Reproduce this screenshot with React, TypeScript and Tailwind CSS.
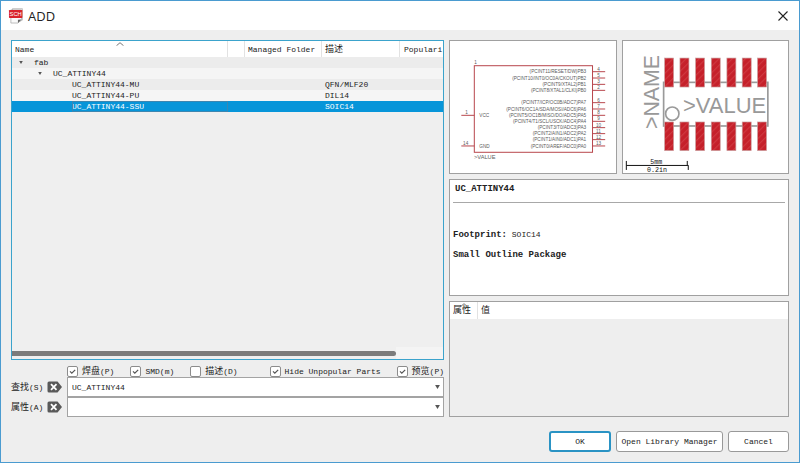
import type { ReactNode } from "react";

const MONO = "font-['Liberation_Mono','Noto_Sans_CJK_SC',monospace]";

function Cjk({ children }: { children: ReactNode }) {
  return <span className="inline-block pt-[2px] align-middle text-[9px]">{children}</span>;
}

function SchIcon() {
  return (
    <svg viewBox="24 20 48 50" className="h-4 w-4" aria-hidden="true">
      <path d="M37 22h31v36l-9 4H37z" fill="#f4f4f4" stroke="#a8a8a8" strokeWidth="2" />
      <path d="M32 26h33v31L54 67H32z" fill="#fafafa" stroke="#9b9b9b" strokeWidth="2" />
      <path d="M65 56L54 67V57z" fill="#666" />
      <rect x="26" y="26" width="42" height="25" rx="2" fill="#d9242b" />
      <text x="47" y="45" textAnchor="middle" fontSize="18" fill="#fff" fontFamily="Liberation Sans, sans-serif">
        SCH
      </text>
    </svg>
  );
}

function SortCaret() {
  return (
    <svg viewBox="0 0 8 4" className="absolute top-px left-1/2 h-1 w-2 -translate-x-1/2" aria-hidden="true">
      <path d="M0.5 3.7L4 0.7L7.5 3.7" fill="none" stroke="#777" />
    </svg>
  );
}

function DownArrow({ small }: { small?: boolean }) {
  return (
    <svg viewBox="0 0 6 5" className={small ? "h-[3px] w-1" : "h-1 w-[5px]"} aria-hidden="true">
      <path d="M0 0h6L3 5z" fill="#555" />
    </svg>
  );
}

type Row = { name: string; level: number; open?: boolean; desc?: string; selected?: boolean };

const rows: Row[] = [
  { name: "fab", level: 0, open: true },
  { name: "UC_ATTINY44", level: 1, open: true },
  { name: "UC_ATTINY44-MU", level: 2, desc: "QFN/MLF20" },
  { name: "UC_ATTINY44-PU", level: 2, desc: "DIL14" },
  { name: "UC_ATTINY44-SSU", level: 2, desc: "SOIC14", selected: true },
];

const indent = ["pl-[7px]", "pl-[26px]", "pl-[45px]"];

function PartTree() {
  const head = "relative h-4 overflow-hidden border-r border-[#e2e2e2] p-0 text-left font-normal whitespace-nowrap";
  return (
    <div className="flex min-h-[200px] flex-1 flex-col overflow-hidden border border-[#3ba3cc] bg-[#efefef]">
      <table className="w-full table-fixed border-separate border-spacing-0">
        <colgroup>
          <col />
          <col className="w-[17px]" />
          <col className="w-[77px]" />
          <col className="w-[78px]" />
          <col className="w-[43px]" />
        </colgroup>
        <thead>
          <tr className="bg-white">
            <th className={head}>
              <SortCaret />
              <span className="pl-[3px]">Name</span>
            </th>
            <th className={head} aria-label="Icon" />
            <th className={head}>
              <span className="pl-[3px]">Managed Folder</span>
            </th>
            <th className={head}>
              <div className="flex pl-[3px]">
                <Cjk>描述</Cjk>
              </div>
            </th>
            <th className="h-4 overflow-hidden p-0 text-left font-normal whitespace-nowrap">
              <span className="pl-1">Populari</span>
            </th>
          </tr>
        </thead>
        <tbody>
          {rows.map((r) => (
            <tr
              key={r.name}
              className={r.selected ? "bg-[#0795d9] text-white" : "odd:bg-[#ececec] even:bg-[#f5f5f5]"}
            >
              <td className="h-[11px] p-0">
                <div className={`flex h-[11px] items-center ${indent[r.level]}`}>
                  <span className="flex w-[15px] shrink-0">{r.open && <DownArrow small />}</span>
                  <span className={r.selected ? "flex-1 outline-1 -outline-offset-1 outline-[#3d86b0]" : ""}>{r.name}</span>
                </div>
              </td>
              <td className="p-0" />
              <td className="p-0" />
              <td className="p-0 pl-[3px]">{r.desc}</td>
              <td className="p-0" />
            </tr>
          ))}
        </tbody>
      </table>
      <div className="mt-auto flex h-3 items-center bg-[#f4f4f4]">
        <div className="flex h-3 w-[89%] items-center bg-[#efefef]">
          <div className="h-[5px] w-full rounded-r-full bg-[#7b7b7b]" />
        </div>
      </div>
    </div>
  );
}

function Check({ children, checked, className = "" }: { children: ReactNode; checked?: boolean; className?: string }) {
  return (
    <label className={`flex items-center gap-1 whitespace-nowrap ${className}`}>
      <span className="grid">
        <input
          type="checkbox"
          defaultChecked={checked}
          className="peer col-start-1 row-start-1 h-[11px] w-[11px] appearance-none rounded-[2px] border border-[#8c8c8c] bg-white"
        />
        <svg
          viewBox="0 0 11 11"
          className="pointer-events-none invisible col-start-1 row-start-1 h-[11px] w-[11px] peer-checked:visible"
          aria-hidden="true"
        >
          <path d="M3 5.4L4.8 7.2L8.2 3.8" fill="none" stroke="#555" strokeWidth="1.2" />
        </svg>
      </span>
      <span className="flex items-center">{children}</span>
    </label>
  );
}

function Combo({ id, label, value }: { id: string; label: ReactNode; value: string }) {
  return (
    <div className="flex h-5 items-center">
      <label htmlFor={id} className="flex w-9 items-center whitespace-nowrap">
        {label}
      </label>
      <button type="button" aria-label="Clear" className="w-5">
        <svg viewBox="0 0 15 12" className="h-3 w-[15px]" aria-hidden="true">
          <path d="M2 0.5h8.5L15 6l-4.500 5.500H2Q0.500 11.500 0.500 10V2Q0.500 0.500 2 0.500z" fill="#595959" />
          <path d="M4 3.200L9.500 8.800M9.500 3.200L4 8.800" stroke="#fff" strokeWidth="1.800" />
        </svg>
      </button>
      <div className="flex h-5 min-w-0 flex-1 items-center border border-[#a3a3a3] bg-white">
        <input id={id} defaultValue={value} className="h-full min-w-0 flex-1 bg-transparent pl-1 outline-none" />
        <button type="button" aria-label="Open list" className="flex h-full w-3 items-center justify-center">
          <DownArrow />
        </button>
      </div>
    </div>
  );
}

const pins = [
  { y: 107, n: "4", t: "(PCINT11/RESET/DW)PB3" },
  { y: 126, n: "5", t: "(PCINT10/INT0/OC0A/CKOUT)PB2" },
  { y: 145, n: "3", t: "(PCINT9/XTAL2)PB1" },
  { y: 163, n: "2", t: "(PCINT8/XTAL1/CLKI)PB0" },
  { y: 200, n: "6", t: "(PCINT7/ICP/OC0B/ADC7)PA7" },
  { y: 219, n: "7", t: "(PCINT6/OC1A/SDA/MOSI/ADC6)PA6" },
  { y: 238, n: "8", t: "(PCINT5/OC1B/MISO/DO/ADC5)PA5" },
  { y: 256, n: "9", t: "(PCINT4/T1/SCL/USCK/ADC4)PA4" },
  { y: 275, n: "10", t: "(PCINT3/T0/ADC3)PA3" },
  { y: 293, n: "11", t: "(PCINT2/AIN1/ADC2)PA2" },
  { y: 311, n: "12", t: "(PCINT1/AIN0/ADC1)PA1" },
  { y: 330, n: "13", t: "(PCINT0/AREF/ADC0)PA0" },
];

function Schematic() {
  return (
    <svg
      viewBox="15 15 497 396"
      className="h-full w-full"
      role="img"
      aria-label="Symbol"
      fontFamily="Liberation Sans, sans-serif"
      fontSize="14"
      fill="#5c5c5c"
    >
      <rect x="88" y="89" width="355" height="260" fill="none" stroke="#b8464c" strokeWidth="3" />
      {pins.map((p) => (
        <g key={p.n}>
          <path d={`M443 ${p.y}h38`} stroke="#b8464c" strokeWidth="3" />
          <text x="424" y={p.y + 5} textAnchor="end">
            {p.t}
          </text>
          <text x="461" y={p.y - 3} textAnchor="middle">
            {p.n}
          </text>
        </g>
      ))}
      <path d="M49 238h39M49 330h39" stroke="#b8464c" strokeWidth="3" />
      <text x="65" y="235" textAnchor="middle">1</text>
      <text x="62" y="327" textAnchor="middle">14</text>
      <text x="103" y="242">VCC</text>
      <text x="103" y="335">GND</text>
      <text x="88" y="83">1</text>
      <text x="87" y="368" fontSize="17">&gt;VALUE</text>
    </svg>
  );
}

const pads = [147, 193, 240, 287, 334, 380, 426];

function Footprint() {
  return (
    <svg viewBox="22 15 497 396" className="h-full w-full" role="img" aria-label="Footprint" fontFamily="Liberation Sans, sans-serif">
      <defs>
        <pattern id="hatch" width="14" height="14" patternUnits="userSpaceOnUse" patternTransform="rotate(45)">
          <rect width="14" height="14" fill="#c5202a" />
          <path d="M2 0v14" stroke="#d64a50" strokeWidth="2" />
        </pattern>
      </defs>
      <rect x="144" y="139" width="313" height="131" fill="none" stroke="#9a9a9a" strokeWidth="5" />
      {pads.map((x) => (
        <g key={x} fill="url(#hatch)" stroke="#c9a0a0" strokeWidth="2">
          <rect x={x} y="66" width="27" height="87" />
          <rect x={x} y="258" width="27" height="86" />
        </g>
      ))}
      <circle cx="170" cy="233" r="20" fill="none" stroke="#9a9a9a" strokeWidth="5" />
      <text x="202" y="230" fontSize="66" fill="#999">&gt;VALUE</text>
      <text transform="translate(131 279) rotate(-90)" fontSize="64" fill="#999">&gt;NAME</text>
      <path d="M32 388.500H218M32 375v27M215 375v13M218 388v14" fill="none" stroke="#111" strokeWidth="3" />
      <g fontFamily="Liberation Mono, monospace" fontSize="20" textAnchor="middle" fill="#111">
        <text x="122" y="384">5mm</text>
        <text x="124" y="408">0.2in</text>
      </g>
    </svg>
  );
}

export default function App() {
  const panel = "border border-[#a0a0a0]";
  const button = "h-[21px] rounded-[3px] bg-white text-center whitespace-nowrap";
  return (
    <div className={`flex min-h-screen flex-col border border-[#4a9bd0] bg-[#eee] text-[8px] leading-[11px] text-[#222] ${MONO}`}>
      <header className="flex h-[29px] items-center gap-1 bg-white pr-[11px] pl-[7px]">
        <SchIcon />
        <h1 className="flex-1 font-['Open_Sans',sans-serif] text-[13px] leading-4">ADD</h1>
        <button type="button" aria-label="Close">
          <svg viewBox="0 0 10 10" className="h-[10px] w-[10px]" aria-hidden="true">
            <path d="M0.500 0.500L9.500 9.500M9.500 0.500L0.500 9.500" stroke="#222" strokeWidth="1.100" />
          </svg>
        </button>
      </header>

      <main className="grid flex-1 grid-cols-[433fr_340fr] gap-[5px] px-[10px] pt-[10px]">
        <section className="flex min-w-0 flex-col">
          <PartTree />
          <div className="mt-[5px] flex h-3 items-center gap-4 pl-14">
            <Check checked>
              <Cjk>焊盘</Cjk>(P)
            </Check>
            <Check checked>SMD(m)</Check>
            <Check className="mr-auto">
              <Cjk>描述</Cjk>(D)
            </Check>
            <Check checked>Hide Unpopular Parts</Check>
            <Check checked>
              <Cjk>预览</Cjk>(P)
            </Check>
          </div>
          <Combo id="search" label={<><Cjk>查找</Cjk>(S)</>} value="UC_ATTINY44" />
          <Combo id="attribute" label={<><Cjk>属性</Cjk>(A)</>} value="" />
        </section>

        <section className="flex min-w-0 flex-col gap-[5px]">
          <div className="grid h-[134px] grid-cols-2 gap-[5px]">
            <div className={`${panel} min-h-0 bg-white`}>
              <Schematic />
            </div>
            <div className={`${panel} min-h-0 bg-white`}>
              <Footprint />
            </div>
          </div>
          <div className={`${panel} bg-white px-[3px] pt-1 pb-[34px]`}>
            <h2 className="pl-[2px] text-[9px] font-bold">UC_ATTINY44</h2>
            <hr className="mt-[7px] border-[#a8a8a8]" />
            <p className="mt-[26px]">
              <b className="text-[9px]">Footprint:</b> SOIC14
            </p>
            <p className="mt-[9px] text-[9px] font-bold">Small Outline Package</p>
          </div>
          <div className={`${panel} flex-1`}>
            <table className="w-full table-fixed border-separate border-spacing-0 bg-white">
              <colgroup>
                <col className="w-7" />
                <col />
              </colgroup>
              <thead>
                <tr>
                  <th className="relative h-[17px] border-r border-[#e2e2e2] p-0 text-left font-normal">
                    <SortCaret />
                    <div className="flex pl-[3px]">
                      <Cjk>属性</Cjk>
                    </div>
                  </th>
                  <th className="p-0 text-left font-normal">
                    <div className="flex pl-[3px]">
                      <Cjk>值</Cjk>
                    </div>
                  </th>
                </tr>
              </thead>
            </table>
          </div>
        </section>
      </main>

      <footer className="flex justify-end gap-[5px] px-[10px] pt-[14px] pb-[10px]">
        <button type="button" className={`${button} w-[62px] border-2 border-[#2a93c4]`}>OK</button>
        <button type="button" className={`${button} w-[107px] border border-[#999]`}>Open Library Manager</button>
        <button type="button" className={`${button} w-[61px] border border-[#999]`}>Cancel</button>
      </footer>
    </div>
  );
}
